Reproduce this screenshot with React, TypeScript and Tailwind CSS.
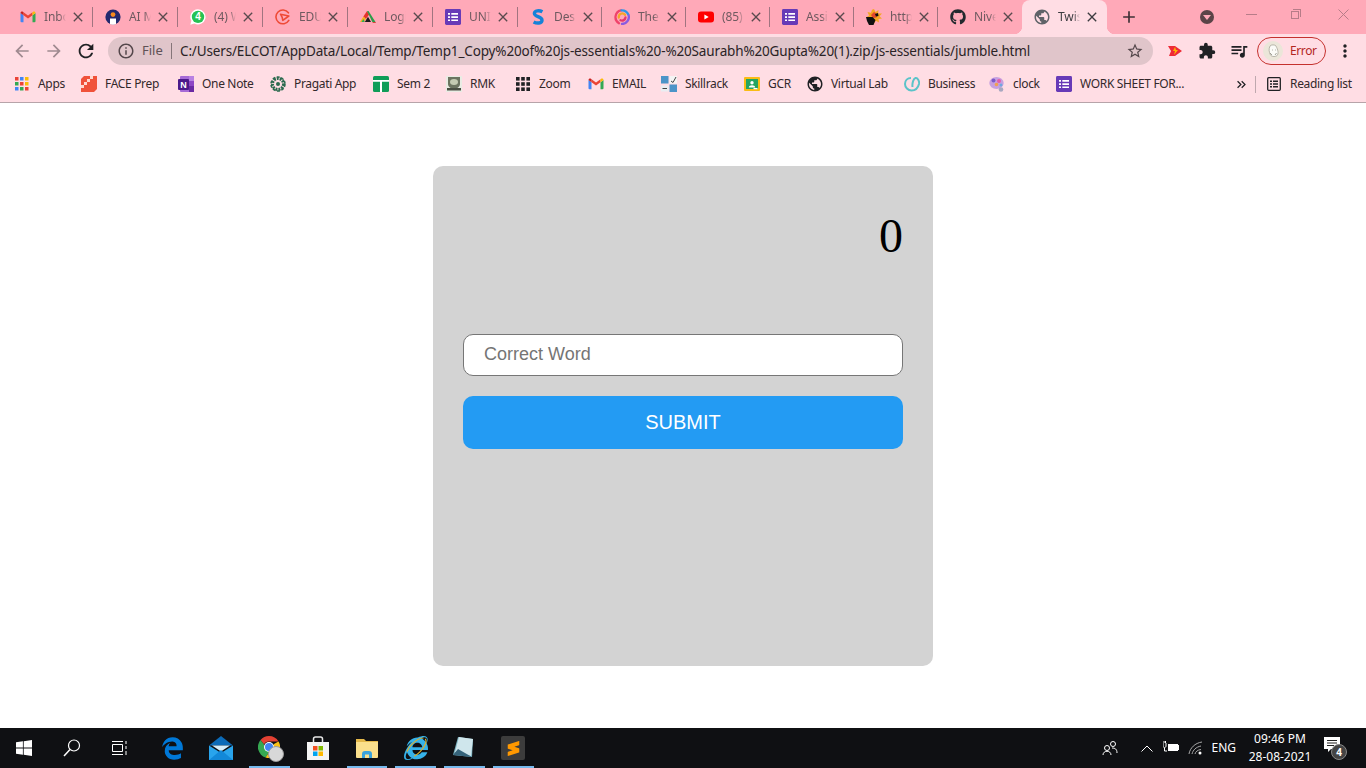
import React from "react";
import {
  MdAdd, MdArrowBack, MdArrowForward, MdClose, MdExtension, MdInfoOutline,
  MdKeyboardDoubleArrowRight, MdMoreVert, MdPublic, MdQueueMusic, MdRefresh, MdStarBorder,
} from "react-icons/md";
import { FaGithub, FaInternetExplorer } from "react-icons/fa";
import { FaEdgeLegacy } from "react-icons/fa6";
import { SiSublimetext } from "react-icons/si";

const S = ({ children, size = 16, vb = "0 0 16 16" }: { children: React.ReactNode; size?: number; vb?: string }) => (
  <svg width={size} height={size} viewBox={vb} className="block shrink-0">{children}</svg>
);

const Gmail = () => (
  <S>
    <path fill="#4285f4" d="M.5 4v8.300a1 1 0 0 0 1 1h2V6.200z" />
    <path fill="#34a853" d="M15.500 4v8.300a1 1 0 0 1-1 1h-2V6.200z" />
    <path fill="#ea4335" d="M3.500 6.200v-3L8 6.600l4.500-3.400v3L8 9.600z" />
    <path fill="#c5221f" d="M.5 4C.5 2.800 1.900 2.100 2.900 2.800l.6.400v3z" />
    <path fill="#fbbc04" d="M15.500 4c0-1.200-1.400-1.900-2.400-1.200l-.6.400v3z" />
  </S>
);
const Ai = () => (
  <S>
    <circle cx="8" cy="8" r="7.600" fill="#23296e" />
    <circle cx="8" cy="5.600" r="2.400" fill="#f58a1f" />
    <path fill="#fff" d="M5 15V9.500h6V15a7.500 7.500 0 0 1-6 0z" />
  </S>
);
const Whats = () => (
  <S>
    <path fill="#fff" d="M8 .3a7.600 7.600 0 0 0-6.600 11.400L.3 15.700l4.100-1.100A7.600 7.600 0 1 0 8 .3z" />
    <circle cx="8" cy="7.900" r="6.200" fill="#25c254" />
    <text x="8" y="11.400" textAnchor="middle" fontSize="10" fontWeight="700" fill="#fff" fontFamily="'Liberation Sans',sans-serif">4</text>
  </S>
);
const Edu = () => (
  <S>
    <path fill="none" stroke="#ee4a36" strokeWidth="1.600" strokeLinecap="round" d="M13.800 11.400A6.900 6.900 0 1 1 13.400 3.800" />
    <path fill="none" stroke="#ee4a36" strokeWidth="1.600" strokeLinejoin="round" d="M5.500 5.200 13.800 7 7.800 11.400 7.200 8.300z" />
  </S>
);
const Log = () => (
  <S>
    <path fill="#f6b21b" d="M0 13 3.400 7.500 6 9.800 3.800 13z" />
    <path fill="#34a853" d="M1.500 13 3.400 10 4.800 13z" />
    <path fill="#e5332a" d="M3.400 7.500 7 2 9.200 5.500 6 9.800z" />
    <path fill="#2c9c48" d="M7 2h1.500L15.500 13h-3.200z" />
    <path fill="#1d1d1b" d="M4.800 13 8 7.800 11 13z" />
    <path fill="#d8433a" d="M12.300 13 15.500 13 16 14H13z" />
  </S>
);
const Form = () => (
  <S>
    <rect width="16" height="16" rx="1.400" fill="#673ab7" />
    <path fill="#fff" d="M3 4h2v1.700H3zM6.300 4H13v1.700H6.300zM3 7.200h2v1.700H3zM6.300 7.200H13v1.700H6.300zM3 10.400h2v1.700H3zM6.300 10.400H13v1.700H6.300z" />
  </S>
);
const SLogo = () => (
  <S>
    <path fill="none" stroke="#1582d8" strokeWidth="3.400" d="M12.400 2.800C9.500 1.200 4.400 1.300 4.400 4.600c0 3.500 7.600 2.700 7.600 6.600 0 3.400-5.300 3.400-8.400 1.700" />
  </S>
);
const Swirl = () => (
  <S>
    <g fill="none" strokeWidth="2.300" strokeLinecap="round">
      <path stroke="#f0436b" d="M7 1.400A7 7 0 0 0 5 14.300" />
      <path stroke="#2f95e8" d="M7.500 1.300A7 7 0 0 1 14.300 5.500" />
      <path stroke="#8a5be0" d="M14.700 6.500A7 7 0 0 1 8 15" />
      <path stroke="#f4a52a" d="M4.800 8.500A3.500 3.500 0 0 1 11 5.800" />
      <path stroke="#e5386d" d="M11.500 8.500A3.500 3.500 0 0 1 6.500 11.200" />
    </g>
  </S>
);
const Yt = () => (
  <S>
    <rect y="2.500" width="16" height="11" rx="3" fill="#f00" />
    <path fill="#fff" d="M6.400 5.500v5l4.300-2.500z" />
  </S>
);
const Burst = () => (
  <S>
    <path fill="#f5a623" d="M8 0l1.500 3L12.500 1l-.4 3.500L16 4.500l-2.500 2.800L16 9.500l-3.500.5.500 3.500-3-1.800L8 14.500 6.500 12 3 13l.5-3.500L0 8.500l3-2L1.500 3l3.500.7L6 .8z" />
    <path fill="#e2472c" d="M8 3l3 2-.5 3.500L7 9 5 6z" />
    <path fill="#111" d="M0 8h6.500l3 3-2 5H3L1 12zM9 5l3-1 .5 3-2.500.5z" />
  </S>
);
const Apps = () => {
  const c = ["#ea4335", "#4285f4", "#fbbc04", "#34a853", "#ea4335", "#fbbc04", "#4285f4", "#34a853", "#ea4335"];
  return (
    <S size={14} vb="0 0 14 14">
      {c.map((f, i) => (
        <rect key={i} x={(i % 3) * 5} y={Math.floor(i / 3) * 5} width="3.500" height="3.500" fill={f} />
      ))}
    </S>
  );
};
const Face = () => (
  <S>
    <path fill="#f0523a" d="M0 3l3-3h13v13l-3 3H0z" />
    <path fill="#ffd9d0" d="M0 9h3V6h3V3h3V0h3v3H9v3H6v3H3v3H0z" />
  </S>
);
const OneNote = () => (
  <S>
    <rect x="2" y="0" width="14" height="16" rx="1" fill="#a66ad6" />
    <rect x="11" y="0" width="5" height="5" fill="#b881e2" />
    <rect x="11" y="5" width="5" height="5" fill="#8e46c5" />
    <rect x="11" y="10" width="5" height="6" fill="#6a2aa3" />
    <rect x="0" y="3" width="11" height="11" rx="1" fill="#4a1a8a" />
    <text x="5.500" y="12" textAnchor="middle" fontSize="9" fontWeight="700" fill="#fff" fontFamily="'Liberation Sans',sans-serif">N</text>
  </S>
);
const Pragati = () => (
  <S>
    <circle cx="8" cy="8" r="5.500" fill="none" stroke="#2b6a4e" strokeWidth="3" strokeDasharray="2 1" />
    <circle cx="8" cy="8" r="7" fill="none" stroke="#2b6a4e" strokeWidth="1.500" strokeDasharray="3 1.500" />
    <circle cx="8" cy="8" r="2" fill="#2b6a4e" />
  </S>
);
const Sem = () => (
  <S>
    <rect width="16" height="16" rx="1.500" fill="#0f9d58" />
    <path fill="#fff" d="M0 4h16v1.700H9V16H7V5.700H0z" />
  </S>
);
const Rmk = () => (
  <S>
    <rect y="0" width="16" height="16" fill="#e9ece4" />
    <path fill="#6c7460" d="M2 1h12v7c0 3-3 4-6 6-3-2-6-3-6-6z" />
    <ellipse cx="8" cy="6" rx="4" ry="3" fill="#c4cbb2" />
    <rect x="1" y="12" width="14" height="2.500" fill="#4a4f43" />
  </S>
);
const Zoom = () => (
  <S size={14} vb="0 0 14 14">
    {[0, 1, 2, 3, 4, 5, 6, 7, 8].map((i) => (
      <rect key={i} x={(i % 3) * 5.200} y={Math.floor(i / 3) * 5.200} width="3.600" height="3.600" fill="#202124" />
    ))}
  </S>
);
const Skill = () => (
  <S>
    <rect x="8.500" y="0" width="7.500" height="7.500" fill="#f4f4f4" />
    <rect x="0" y="0" width="7.500" height="7.500" fill="#4b94c8" />
    <rect x="8.500" y="8.500" width="7.500" height="7.500" fill="#4b94c8" />
    <rect x="0" y="9.500" width="7.500" height="6" fill="#e9eef2" />
    <path stroke="#444" strokeWidth="1" fill="none" d="M10 5l2 1.500L15 1M1.500 12.500h4.500" />
  </S>
);
const Gcr = () => (
  <S>
    <rect y="1" width="16" height="14" rx="1" fill="#f9bc15" />
    <rect x="2" y="3" width="12" height="10" fill="#24a462" />
    <circle cx="8" cy="6.800" r="1.700" fill="#fff" />
    <path fill="#fff" d="M4.800 11.500c0-3 6.400-3 6.400 0z" />
    <rect x="9.500" y="12" width="4" height="1.200" fill="#fff" />
  </S>
);
const Globe = ({ c = "#202124" }: { c?: string }) => <MdPublic size={18} color={c} className="block shrink-0 -m-px" />;
const Biz = () => (
  <S>
    <path fill="none" stroke="#5bc3c9" strokeWidth="2" d="M7 2C3.500 2 1 4.500 1 8s3 6.500 6.500 6.500S14 12 15 8c.6-3-1.500-6.500-3.500-6-2 .5-3.500 5-3 9" />
  </S>
);
const Clock = () => (
  <S>
    <ellipse cx="7.500" cy="7" rx="7.200" ry="6" fill="#c7a0e0" />
    <circle cx="4.500" cy="4.500" r="2" fill="#7a5ac8" />
    <circle cx="10" cy="5" r="2" fill="#e35ea8" />
    <circle cx="7.500" cy="8.500" r="1.800" fill="#f0a050" />
    <circle cx="12" cy="9" r="1.500" fill="#6fa8e0" />
    <circle cx="12" cy="13.500" r="2.300" fill="#a8a8c0" />
  </S>
);
const ReadingList = () => (
  <S size={14} vb="0 0 14 14">
    <rect x=".7" y=".7" width="12.600" height="12.600" rx="1" fill="none" stroke="#202124" strokeWidth="1.300" />
    <path fill="#202124" d="M3 3.500h2v1.500H3zM6 3.500h5v1.500H6zM3 6.300h2v1.500H3zM6 6.300h5v1.500H6zM3 9.100h2v1.500H3zM6 9.100h5v1.500H6z" />
  </S>
);

const tabs: { title: string; icon: React.ReactNode; w: string; sep: boolean }[] = [
  { title: "Inbox", icon: <Gmail />, w: "w-[85px]", sep: true },
  { title: "AI Mentor", icon: <Ai />, w: "w-[85px]", sep: true },
  { title: "(4) WhatsApp", icon: <Whats />, w: "w-[85px]", sep: true },
  { title: "EDU", icon: <Edu />, w: "w-[85px]", sep: true },
  { title: "Login", icon: <Log />, w: "w-[85px]", sep: true },
  { title: "UNIT", icon: <Form />, w: "w-[85px]", sep: true },
  { title: "Design", icon: <SLogo />, w: "w-[84px]", sep: true },
  { title: "The", icon: <Swirl />, w: "w-[84px]", sep: true },
  { title: "(85) YouTube", icon: <Yt />, w: "w-[84px]", sep: true },
  { title: "Assign", icon: <Form />, w: "w-[84px]", sep: true },
  { title: "https", icon: <Burst />, w: "w-[84px]", sep: true },
  { title: "Nivetha", icon: <FaGithub size={16} color="#24292e" className="block shrink-0" />, w: "w-[84px]", sep: false },
];

const bookmarks: { label: string; icon: React.ReactNode; w: string }[] = [
  { label: "Apps", icon: <Apps />, w: "w-[67px]" },
  { label: "FACE Prep", icon: <Face />, w: "w-[97px]" },
  { label: "One Note", icon: <OneNote />, w: "w-[92px]" },
  { label: "Pragati App", icon: <Pragati />, w: "w-[103px]" },
  { label: "Sem 2", icon: <Sem />, w: "w-[73px]" },
  { label: "RMK", icon: <Rmk />, w: "w-[69px]" },
  { label: "Zoom", icon: <Zoom />, w: "w-[73px]" },
  { label: "EMAIL", icon: <Gmail />, w: "w-[73px]" },
  { label: "Skillrack", icon: <Skill />, w: "w-[83px]" },
  { label: "GCR", icon: <Gcr />, w: "w-[63px]" },
  { label: "Virtual Lab", icon: <Globe />, w: "w-[97px]" },
  { label: "Business", icon: <Biz />, w: "w-[85px]" },
  { label: "clock", icon: <Clock />, w: "w-[67px]" },
  { label: "WORK SHEET FOR...", icon: <Form />, w: "w-[140px]" },
];

const Win = () => (
  <S>
    <path fill="#fff" d="M0 2.300 6.900 1.300v6.300H0zM7.700 1.200 16 0v7.600H7.700zM0 8.400h6.900v6.300L0 13.700zM7.700 8.400H16V16l-8.300-1.200z" />
  </S>
);
const Search = () => (
  <S size={18} vb="0 0 18 18">
    <circle cx="11" cy="6.500" r="5.500" fill="none" stroke="#fff" strokeWidth="1.200" />
    <path stroke="#fff" strokeWidth="1.500" d="M7 10.500 1 17" />
  </S>
);
const TaskView = () => (
  <S size={16} vb="0 0 16 16">
    <path fill="none" stroke="#fff" strokeWidth="1" d="M.5 4.500h10v7H.5zM0 1.500h11M0 14.500h11M14 1v3M14 6v3M14 11v4" />
  </S>
);
const Chrome = () => (
  <div className="relative w-6 h-6">
    <svg width="22" height="22" viewBox="0 0 22 22" className="block">
      <path fill="#e34133" d="M11 0a11 11 0 0 1 9.500 5.500H11a5.500 5.500 0 0 0-5 3L2.500 4A11 11 0 0 1 11 0z" />
      <path fill="#36a852" d="M2.500 4 6 8.500 11 16.500 7.500 21.500A11 11 0 0 1 2.500 4z" />
      <path fill="#fbc116" d="M20.500 5.500A11 11 0 0 1 7.500 21.500L11 16.500 16 8z" />
      <circle cx="11" cy="11" r="5" fill="#fff" />
      <circle cx="11" cy="11" r="4" fill="#4285f4" />
    </svg>
    <div className="absolute right-[-2px] bottom-[-2px] w-[16px] h-[16px] rounded-full bg-[#d8d8d8] border border-[#9a9a9a]" />
  </div>
);
const Mail = () => (
  <S size={24} vb="0 0 24 24">
    <path fill="#0c6bb8" d="M0 9.500 12 0l12 9.500z" />
    <path fill="#29a4ec" d="M0 9.500 12 17l12-7.500V24H0z" />
    <path fill="#d5eefb" d="M3 9.500h18L12 15.500z" />
    <path fill="#1288d8" d="M0 24 12 14l12 10z" />
  </S>
);
const Store = () => (
  <S size={24} vb="0 0 24 24">
    <path fill="none" stroke="#e8e8e8" strokeWidth="1.500" d="M7.500 8V3a2 2 0 0 1 2-2h5a2 2 0 0 1 2 2v5" />
    <rect x="1" y="6" width="22" height="18" fill="#f4f4f4" />
    <rect x="7" y="10" width="4.500" height="4.500" fill="#f25022" />
    <rect x="12.500" y="10" width="4.500" height="4.500" fill="#7fba00" />
    <rect x="7" y="15.500" width="4.500" height="4.500" fill="#00a4ef" />
    <rect x="12.500" y="15.500" width="4.500" height="4.500" fill="#ffb900" />
  </S>
);
const Folder = () => (
  <S size={22} vb="0 0 22 22">
    <path fill="#e5b94a" d="M0 2h8l2 2h12v3H0z" />
    <path fill="#fbe08c" d="M0 5h22v15a1 1 0 0 1-1 1H1a1 1 0 0 1-1-1z" />
    <path fill="#3aa3dc" d="M6 21v-4a3 3 0 0 1 3-3h4a3 3 0 0 1 3 3v4h-3v-3.500H9V21z" />
  </S>
);
const Notes = () => (
  <S size={24} vb="0 0 24 24">
    <path fill="#7fb5c3" d="M6 1 21 3 20 21 1 19z" />
    <path fill="#cfe6ec" d="M7 1l14 2-2 17L3 16z" />
    <path fill="#35637a" d="M1 19l5-6 14 8z" />
  </S>
);
const Bar = ({ children, on }: { children: React.ReactNode; on?: boolean }) => (
  <div className="relative w-[48.7px] h-10 flex items-center justify-center">
    {children}
    {on && <div className="absolute left-1 right-1 bottom-0 h-[2px] bg-[#76b9ed]" />}
  </div>
);

export default function App() {
  return (
    <div className="h-screen w-[1366px] overflow-hidden flex flex-col bg-white font-['Noto_Sans',sans-serif]">
      {/* Tab strip */}
      <div className="h-[34px] bg-[#ffa9b8] flex pl-2 relative shrink-0">
        {tabs.map((t, i) => (
          <div key={i} className={`${t.w} h-[34px] flex items-center pl-3 pb-px shrink-0`}>
            {t.icon}
            <div className="ml-2 w-[22px] overflow-hidden whitespace-nowrap text-[12px] tracking-[-0.1px] text-[#6f5a60] [mask-image:linear-gradient(to_right,black_70%,transparent)]">
              {t.title}
            </div>
            <MdClose size={16} color="#5a4a4e" className="ml-1 shrink-0" />
            <div className="flex-1" />
            {t.sep && <div className="w-px h-5 bg-[#a17480]" />}
          </div>
        ))}
        <div className="relative w-[85px] h-[34px] bg-[#ffdde4] rounded-t-[8px] flex items-center pl-3 pb-px shrink-0">
          <div className="absolute -left-2 bottom-0 w-2 h-2 bg-[radial-gradient(circle_at_0_0,transparent_8px,#ffdde4_8.500px)]" />
          <div className="absolute -right-2 bottom-0 w-2 h-2 bg-[radial-gradient(circle_at_100%_0,transparent_8px,#ffdde4_8.500px)]" />
          <MdPublic size={18} color="#5f6368" className="block shrink-0 -m-px" />
          <div className="ml-2 w-[22px] overflow-hidden whitespace-nowrap text-[12px] tracking-[-0.1px] text-[#3c3c40] [mask-image:linear-gradient(to_right,black_70%,transparent)]">
            Twist
          </div>
          <MdClose size={16} color="#3c3c40" className="ml-1 shrink-0" />
        </div>
        <div className="ml-[12px] w-[20px] h-[34px] flex items-center justify-center pb-px">
          <MdAdd size={20} color="#3f3136" />
        </div>
        <div className="ml-[58px] w-[20px] h-[34px] flex items-center justify-center">
          <div className="w-[14px] h-[14px] rounded-full bg-[#5b4347] flex items-center justify-center">
            <div className="w-0 h-0 border-x-[4px] border-x-transparent border-t-[5px] border-t-[#ffa9b8] mt-[1px]" />
          </div>
        </div>
        <div className="flex-1" />
        <div className="flex h-[28px] items-center pr-[17px]">
          <div className="w-[11px] h-px bg-[#b77c88] mr-[34px]" />
          <div className="relative w-[10px] h-[10px] mr-[37px]">
            <div className="absolute left-0 bottom-0 w-2 h-2 border border-[#b77c88]" />
            <div className="absolute right-0 top-0 w-2 h-2 border-t border-r border-[#b77c88]" />
          </div>
          <svg width="11" height="11" viewBox="0 0 11 11"><path d="M.5.500l10 10M10.500.500l-10 10" stroke="#b77c88" strokeWidth="1" /></svg>
        </div>
      </div>

      {/* Toolbar */}
      <div className="h-[34px] bg-[#ffdde4] flex items-center pl-[6px] shrink-0">
        <div className="w-8 flex justify-center"><MdArrowBack size={20} color="#a08a90" /></div>
        <div className="w-8 flex justify-center"><MdArrowForward size={20} color="#a08a90" /></div>
        <div className="w-8 flex justify-center"><MdRefresh size={22} color="#202124" /></div>
        <div className="ml-[6px] w-[1045px] h-[28px] rounded-full bg-[#e0c5ca] flex items-center pl-[9px] pr-[9px]">
          <MdInfoOutline size={18} color="#54474b" className="shrink-0" />
          <span className="ml-[7px] w-[21px] text-[13px] text-[#5f5256]">File</span>
          <div className="ml-[8px] w-px h-4 bg-[#857579]" />
          <span className="ml-[8px] mt-px flex-1 whitespace-nowrap text-[13.5px] tracking-[-0.15px] text-[#2a2326]">
            C:/Users/ELCOT/AppData/Local/Temp/Temp1_Copy%20of%20js-essentials%20-%20Saurabh%20Gupta%20(1).zip/js-essentials/jumble.html
          </span>
          <MdStarBorder size={18} color="#54474b" className="shrink-0" />
        </div>
        <div className="ml-[6px] w-8 flex justify-center">
          <svg width="14" height="12" viewBox="0 0 14 12">
            <path fill="#ee2a36" d="M0 1h7l7 5-7 5H1l2-5z" />
            <path fill="#ffb300" d="M7 2 5 6h2l-1 4 4-5H8z" />
          </svg>
        </div>
        <div className="w-8 flex justify-center"><MdExtension size={18} color="#202124" /></div>
        <div className="w-8 flex justify-center"><MdQueueMusic size={20} color="#202124" /></div>
        <div className="ml-[2px] w-[69px] h-[28px] rounded-full border border-[#c5312e] flex items-center pl-[5px]">
          <svg width="20" height="20" viewBox="0 0 20 20" className="shrink-0">
            <circle cx="10" cy="10" r="10" fill="#ebe6d9" />
            <path fill="#fbfbf7" stroke="#a9a79b" strokeWidth=".8" d="M7 5c1-1.500 5-1.500 6 0 1 2 3 6 1.500 9-1 2-6 2-7 0C6 11 5.500 8 7 5z" />
            <path stroke="#8d8b80" strokeWidth=".8" fill="none" d="M9 9h.8M12 9h.8M7 12l2 2M13.500 12l-1.500 2" />
          </svg>
          <span className="ml-[7px] text-[12px] tracking-[-0.4px] text-[#b3261e]">Error</span>
        </div>
        <div className="ml-[3px] w-8 flex justify-center"><MdMoreVert size={20} color="#202124" /></div>
      </div>

      {/* Bookmarks */}
      <div className="h-[35px] bg-[#ffdde4] border-b border-[#b7a4a9] flex items-center pl-[14px] pb-[2px] shrink-0">
        {bookmarks.map((b) => (
          <div key={b.label} className={`${b.w} flex items-center shrink-0`}>
            <div className="w-4 flex justify-center">{b.icon}</div>
            <span className="ml-2 whitespace-nowrap text-[12px] tracking-[-0.33px] text-[#33282b]">{b.label}</span>
          </div>
        ))}
        <div className="ml-[37px] w-4 flex justify-center"><MdKeyboardDoubleArrowRight size={15} color="#202124" /></div>
        <div className="ml-[6px] w-px h-[17px] bg-[#bfa8ae]" />
        <div className="ml-[11px]"><ReadingList /></div>
        <span className="ml-[9px] whitespace-nowrap text-[12px] tracking-[-0.33px] text-[#33282b]">Reading list</span>
      </div>

      {/* Page */}
      <main className="flex-1 flex items-center justify-center bg-white">
        <div className="w-[500px] h-[500px] bg-[#d3d3d3] rounded-[10px] px-[30px] pt-[42px] flex flex-col">
          <div className="text-right text-[48px] leading-[55px] text-black font-['Liberation_Serif',serif]">0</div>
          <input
            placeholder="Correct Word"
            className="mt-[71px] h-[42px] w-[440px] rounded-[10px] border border-[#767676] bg-white pl-[20px] pb-px text-[18px] font-['Liberation_Sans',sans-serif] placeholder:text-[#757575] outline-none"
          />
          <button className="mt-[20px] h-[53px] w-[440px] rounded-[10px] bg-[#239bf3] text-white text-[20px] font-['Liberation_Sans',sans-serif]">
            SUBMIT
          </button>
        </div>
      </main>

      {/* Taskbar */}
      <div className="h-10 bg-[#0f1013] flex items-center shrink-0 relative">
        <div className="w-12 flex justify-center"><Win /></div>
        <div className="w-12 flex justify-center"><Search /></div>
        <div className="w-12 flex justify-center mr-[4px]"><TaskView /></div>
        <Bar><FaEdgeLegacy size={23} color="#0078d7" /></Bar>
        <Bar><Mail /></Bar>
        <Bar on><Chrome /></Bar>
        <Bar><Store /></Bar>
        <Bar on><Folder /></Bar>
        <Bar on>
          <div className="relative">
            <FaInternetExplorer size={24} color="#36b3ea" />
            <svg width="26" height="26" viewBox="0 0 26 26" className="absolute -left-px -top-px">
              <ellipse cx="13" cy="13" rx="13" ry="5.500" transform="rotate(-45 13 13)" fill="none" stroke="#dcb02f" strokeWidth="1.200" strokeDasharray="22 14" />
            </svg>
          </div>
        </Bar>
        <Bar on><Notes /></Bar>
        <Bar on>
          <div className="w-6 h-6 bg-[#3c3c3c] rounded-[2px] flex items-center justify-center">
            <SiSublimetext size={15} color="#ff9800" />
          </div>
        </Bar>
        <div className="flex-1" />
        <svg width="16" height="16" viewBox="0 0 16 16" className="shrink-0">
          <circle cx="5" cy="8" r="2.500" fill="none" stroke="#fff" />
          <circle cx="11" cy="4" r="2.500" fill="none" stroke="#fff" />
          <path d="M1 15c0-5 8-5 8 0M10 8c3 0 5 1 5 5" fill="none" stroke="#fff" />
        </svg>
        <svg width="12" height="7" viewBox="0 0 12 7" className="ml-[23px] shrink-0">
          <path d="M.5 6.500 6 1l5.500 5.500" fill="none" stroke="#fff" strokeWidth="1" />
        </svg>
        <svg width="16" height="14" viewBox="0 0 16 14" className="ml-[10px] shrink-0">
          <path fill="#fff" d="M5 3h10v1h1v5h-1v1H5z" />
          <path stroke="#fff" fill="none" d="M0 2v3c0 2 3 2 3 0V2M1 0v2M2.500 0v2M1.500 7v3H4" />
        </svg>
        <svg width="16" height="14" viewBox="0 0 16 14" className="ml-[9px] shrink-0">
          <path fill="none" stroke="#a9a9a9" d="M1 13C2 7 7 2 14 1M4 13c1-4 4-7 9-8M7 13c.6-2.400 2.500-4 6-4.500" />
          <circle cx="12" cy="12" r="1.500" fill="#fff" />
        </svg>
        <span className="ml-[7px] text-[12px] text-white">ENG</span>
        <div className="ml-[12px] w-[64px] text-center text-[12px] leading-[18px] text-white">
          <div>09:46 PM</div>
          <div>28-08-2021</div>
        </div>
        <div className="relative ml-[12px] mr-[24px] w-[18px] h-[18px] -mt-[4px]">
          <svg width="16" height="16" viewBox="0 0 16 16">
            <path fill="#fff" d="M0 0h16v12H7l-3 3v-3H0z" />
            <path stroke="#222" d="M3 3.500h10M3 6h10M3 8.500h7" />
          </svg>
          <div className="absolute left-[7px] top-[7px] w-[16px] h-[16px] rounded-full bg-[#444] border border-[#888] text-white text-[10px] leading-[14px] font-bold text-center">4</div>
        </div>
      </div>
    </div>
  );
}
